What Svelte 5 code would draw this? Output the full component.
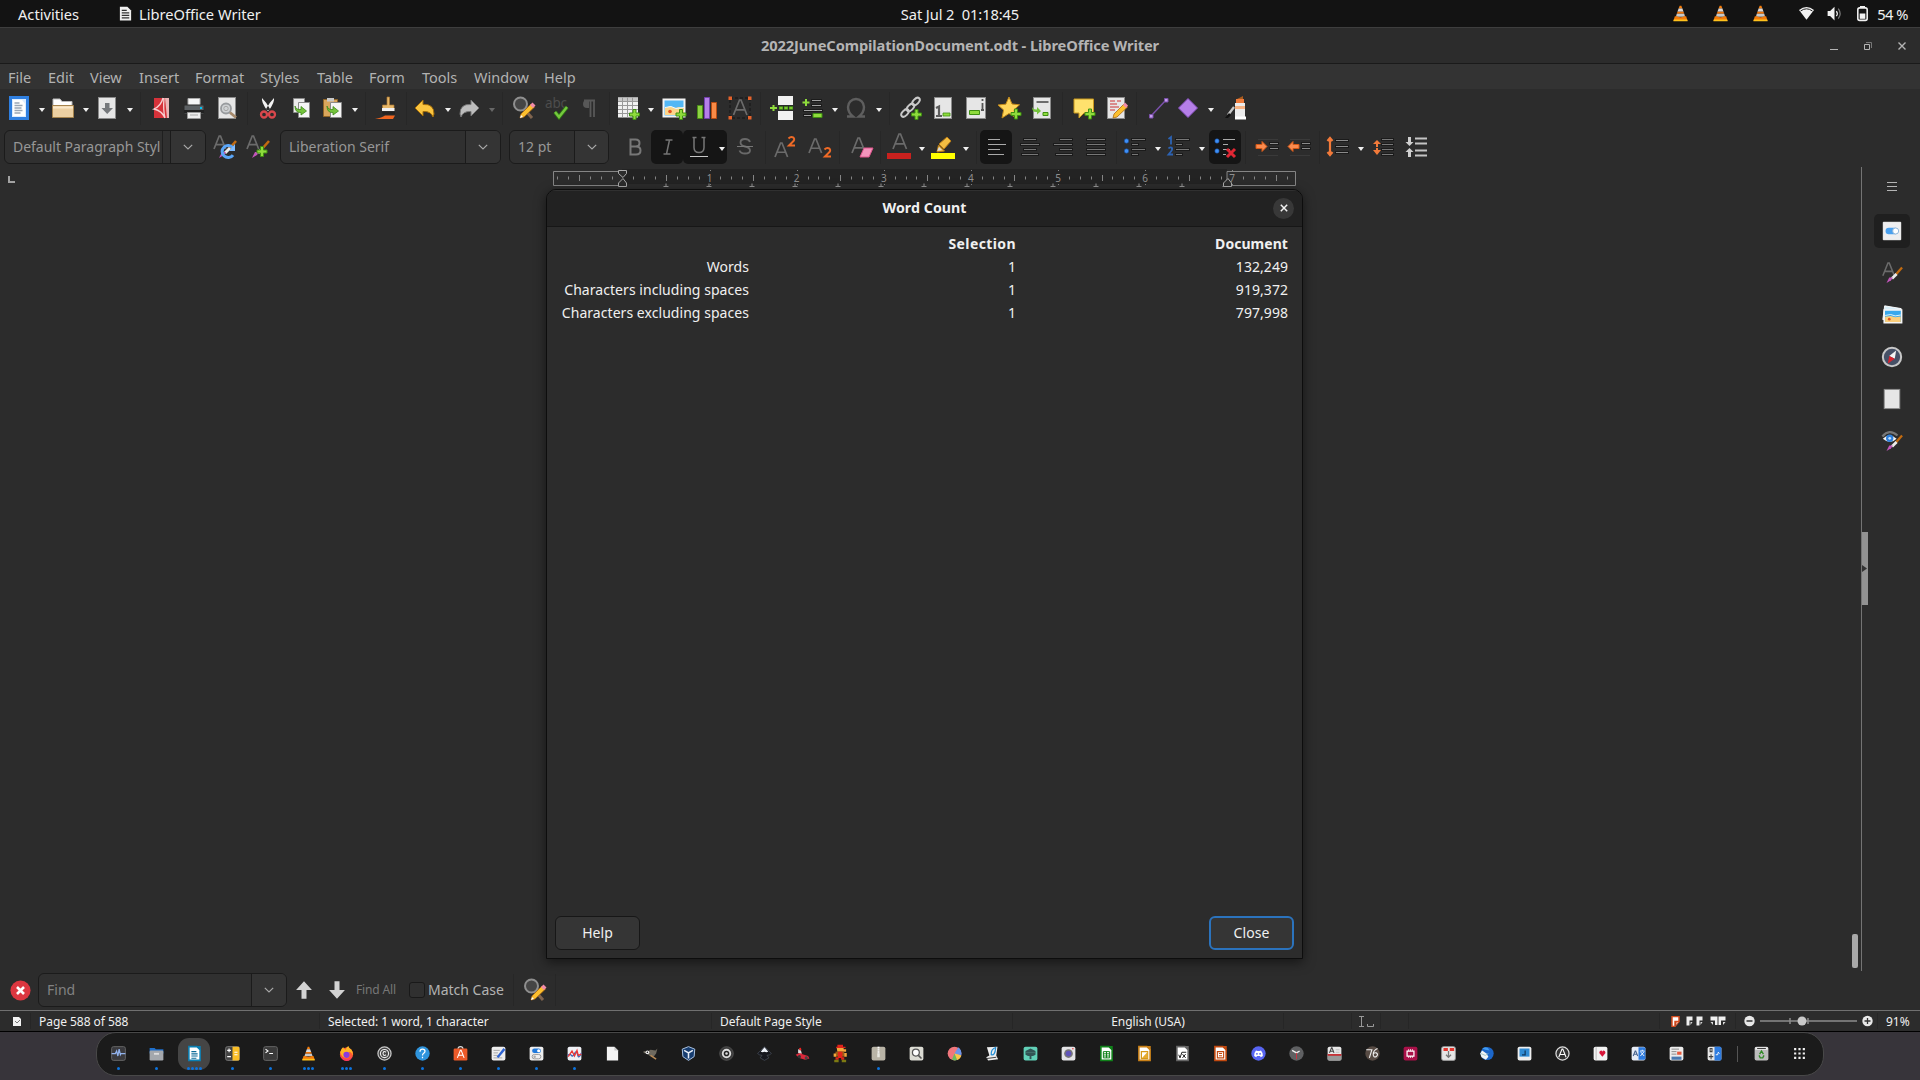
<script>
  // Icon artwork, all on a 24 × 24 grid.
  const page = '<rect x="3.5" y="1.5" width="17" height="21" fill="#e6e6e6" stroke="#8b8b8b"/>';
  const plus = (x, y) =>
    `<path d="M${x - 1.5} ${y - 5}h3v3.5h3.5v3h-3.5v3.5h-3v-3.5h-3.5v-3h3.5z" fill="#8fdc3c" stroke="#3f8f12"/>`;
  const lens =
    '<path d="M13 14l7 8" stroke="#80654f" stroke-width="3"/><circle cx="8.500" cy="8" r="6.500" fill="#454545" stroke="#8f8f8f" stroke-width="2"/><path d="M8 22l1-4L19 8l3.500 3L12 21z" fill="#fcbf2e" stroke="#ad6a12" stroke-width=".8"/><path d="M18 9l2.500-2.500 3 3L21 12z" fill="#f18baa"/><path d="M8 22l1-3 2 2z" fill="#fff"/>';
  const bar = (rows, c = '#747474', dark = '#1b1b1b') =>
    rows.map(([x, y, w]) => `<path d="M${x - 1} ${y + 0.5}h${w + 2}" stroke="${dark}" stroke-width="3"/><path d="M${x} ${y + 0.5}h${w}" stroke="${c}"/>`).join('');
  const photo =
    '<rect x="1.500" y="3.500" width="21" height="17" fill="#52b7f5" stroke="#f4f4f4" stroke-width="2"/><path d="M3 12l5-2 5 2 4-1 5 1v7H3z" fill="#fbd58b"/><path d="M3 11.500l6-1 5 2 8-1" fill="none" stroke="#e9f8ff"/><circle cx="8" cy="15.500" r="1.800" fill="#e3511d"/>';
  const letterA = (x, y, s, c = '#6b6b6b') =>
    `<path d="M${x} ${y}l${s * 0.4} ${-s}h${s * 0.1}l${s * 0.4} ${s}M${x + s * 0.17} ${y - s * 0.34}h${s * 0.57}" fill="none" stroke="${c}" stroke-width="1.700"/>`;
  const brush =
    '<path d="M23 6l-7 8" stroke="#c36b10" stroke-width="2.500"/><path d="M17 13l-5 5" stroke="#ececec" stroke-width="3"/><path d="M13 17l-2 3-5 3 3-6z" fill="#c256ba"/>';
  const dot = (x, y) => `<circle cx="${x}" cy="${y}" r="2.200" fill="#3f90f5" stroke="#1a4ea0" stroke-width=".6"/>`;
  const cone =
    '<path d="M10.800 1h2.400l1.500 4H9.300z" fill="#f57d0a"/><path d="M9.300 5h5.400l1.600 4.500H7.700z" fill="#d9d9d9"/><path d="M7.700 9.500h8.600l1 3H6.700z" fill="#ee7409"/><path d="M6.700 12.500h10.600l1.200 4H5.500z" fill="#c9c9c9"/><path d="M4 16h3q5 2.500 10 0h3l2 6.500H2z" fill="#f07a0a"/><path d="M2.500 20.500h19l.6 2.500H2z" fill="#ffc21c"/>';
  const tile = (bg, inner = '', edge = 'none') =>
    `<rect x="1" y="1" width="22" height="22" rx="3" fill="${bg}" stroke="${edge}" stroke-width="1.500"/>${inner}`;
  const office = (c, inner) =>
    `<path d="M3 1h13l5 5v17H3z" fill="#fff" stroke="${c}" stroke-width="2.500"/><path d="M15 0h7v7z" fill="${c}"/>${inner}`;

  const art = {
    new: '<rect x="3.500" y="1.500" width="17" height="21" fill="#dcecff" stroke="#2f7fe0" stroke-width="3"/><path d="M6 4h9l3 3.500V20H6z" fill="#fff"/><path d="M7.500 7h5m-5 2.500h8m-8 2.500h7m-7 2.500h8m-8 2.500h6" stroke="#9aa6b5" stroke-width="1.300"/>',
    open: '<path d="M2 6V3h7l2 2.500h10V12H2z" fill="#fff" stroke="#b9b9b9"/><path d="M1.500 9.500h21v12h-21z" fill="#ecd0a2" stroke="#a5834d"/><path d="M2 10.500h20v2H2z" fill="#fae8ca"/>',
    save: page + '<path d="M10 7h4.500v5H18l-5.800 6L6.500 12H10z" fill="#75787b"/>',
    pdf: '<path d="M5 2h15v20H5z" fill="#d6323a"/><path d="M16 2h4v20h-2z" fill="#e9b5b7"/><path d="M14 2Q12 10 5 13q8 2 11 9M6 6l0 0M15 2q-1 12 1 20" fill="none" stroke="#f6cfd1" stroke-width="1.300"/>',
    print: '<path d="M6 2.500h12V10H6z" fill="#f6f6f6" stroke="#aaa"/><rect x="2" y="9" width="20" height="9" rx="1" fill="#5c6063" stroke="#2b2b2b"/><path d="M2 14h20v3H2z" fill="#222"/><path d="M5.500 16.500h13v6h-13z" fill="#eee" stroke="#999"/><path d="M8 19h8" stroke="#aaa"/><path d="M18 11h2v2h-2z" fill="#00c3f5"/>',
    preview: page + '<circle cx="11" cy="12.500" r="5" fill="#cfd2d4" stroke="#989b9e" stroke-width="1.800"/><circle cx="11" cy="12.500" r="2.200" fill="none" stroke="#a6a6a6"/><path d="M15 16.500l6 5" stroke="#a5896b" stroke-width="2.800"/>',
    cut: '<path d="M6 2q-1 4 5.500 13L14 13Q11 7 6 2zM18 2q1 4-5.500 13L10 13Q13 7 18 2z" fill="#f4f4f4"/><circle cx="8" cy="18.500" r="3" fill="none" stroke="#d9474c" stroke-width="2.300"/><circle cx="16" cy="18.500" r="3" fill="none" stroke="#d9474c" stroke-width="2.300"/>',
    copy: '<path d="M4.500 2.500h11v14h-11z" fill="#ececec" stroke="#8b8b8b"/><path d="M9.500 6.500h11v15h-11z" fill="#f5f5f5" stroke="#8b8b8b"/><path d="M6 10q1 4 6 3.500V10.500L17.500 15 12 19v-2.500Q6 17 6 10z" fill="#74c33c" stroke="#3f8a19" stroke-width=".8"/>',
    paste: '<path d="M3.500 3.500h14v17h-14z" fill="#d9a65c" stroke="#8f6426"/><path d="M7 2h7v3.500H7z" fill="#c8c8c8"/><path d="M10.500 6.500h11v15h-11z" fill="#f5f5f5" stroke="#8b8b8b"/><path d="M7 10q1 4 6 3.500V10.500L18.500 15 13 19v-2.500Q7 17 7 10z" fill="#74c33c" stroke="#3f8a19" stroke-width=".8"/>',
    clone: '<path d="M12 1h2.500v8H19v4H7.500V9H12z" fill="#e7b768" stroke="#a97730" stroke-width=".7"/><path d="M7 12h12.500v3H7z" fill="#f1f1f1"/><path d="M7 16h13v2.500H8z" fill="#222"/><path d="M0 23q7-1.500 10-3.500h10l-2 3.500z" fill="#f0651f"/>',
    undo: '<path d="M10 4v4.500q11-1 11 9.500l-1 3q-2-6-10-5.500V20L2 12z" fill="#fbc540" stroke="#a36c08"/>',
    redo: '<path d="M14 4v4.500Q3 7.500 3 18l1 3q2-6 10-5.500V20l8-8z" fill="#bdbdbd" stroke="#777"/>',
    find: lens,
    spell: '<text x="0" y="12" font-size="13.500" fill="#4d4d4d" font-family="Noto Sans" textLength="22">abc</text><path d="M10 16l4 5 8-10" fill="none" stroke="#2c7912" stroke-width="4"/><path d="M10 16l4 5 8-10" fill="none" stroke="#76c83e" stroke-width="2.400"/>',
    pilcrow: '<path d="M7 4.500h11M13.500 4v17M17 4v17" stroke="#585858" stroke-width="1.800"/><path d="M12 4H10a4 4 0 0 0 0 8h2z" fill="#585858"/>',
    table: '<path d="M2 1.500h20v20H2z" fill="#f1f1f1"/><path d="M2 1.500h20v4H2z" fill="#c9c9c9"/><path d="M2 5.500h20M2 9.500h20M2 13.500h20M2 17.500h20M6.500 1.500v20M11.500 1.500v20M16.500 1.500v20" stroke="#999"/>' + plus(18.5, 18.5),
    image: photo + plus(19, 18.5),
    chart: '<path d="M2.500 9.500h5v13h-5z" fill="#8ed244" stroke="#4b8f16"/><path d="M9.500 1.500h5v21h-5z" fill="#b57fe8" stroke="#7440ae"/><path d="M16.500 6.500h5v16h-5z" fill="#f98b47" stroke="#b94d12"/>',
    textbox: '<path d="M2 2h20v20H2z" fill="none" stroke="#151515" stroke-dasharray="3 2"/>' + letterA(5.5, 19, 15) + '<path d="M.5.5h3.500v3.500H.5zM20 .5h3.500v3.500H20zM.5 20h3.500v3.500H.5zM20 20h3.500v3.500H20z" fill="#e4622b"/>',
    pagebreak: '<path d="M8 0h15v9H8zM8 15h15v9H8z" fill="#f1f1f1"/><path d="M9 12h15" stroke="#3f8f12" stroke-width="3.500" stroke-dasharray="4 1"/><path d="M9.500 12h15" stroke="#8fdc3c" stroke-width="1.500" stroke-dasharray="3 2"/><path d="M2.500 9h2v2h2.500v2H4.500v2h-2v-2H0v-2h2.500z" fill="#8fdc3c"/>',
    field: bar([[11, 4, 9], [11, 9, 9], [3, 14, 18], [3, 19, 7]], '#a0a0a0') + '<path d="M12 17.500h9v4h-9z" fill="#8fdc3c" stroke="#3f8f12"/><path d="M4 3h2v2.500h2.500v2H6V10H4V7.500H1.500v-2H4z" fill="#8fdc3c"/>',
    omega: '<path d="M3 20.500h6q-5-4-5-9.500a8 8 0 0 1 16 0q0 5.500-5 9.500h6" fill="none" stroke="#5e5e5e" stroke-width="2.400"/>',
    link: '<g fill="none" stroke="#c9c9c9" stroke-width="2"><ellipse cx="17" cy="5.500" rx="4.500" ry="2.600" transform="rotate(-45 17 5.500)"/><ellipse cx="11.500" cy="11.500" rx="4.500" ry="2.600" transform="rotate(-45 11.500 11.500)"/><ellipse cx="6" cy="17" rx="4.500" ry="2.600" transform="rotate(-45 6 17)"/></g>' + plus(17.5, 18.5),
    footnote: page + '<path d="M5 12l3-1.500V20M5 20h6" stroke="#5c5c5c" stroke-width="2.200" fill="none"/><path d="M12 17h7v3h-7z" fill="#8fdc3c" stroke="#3f8f12" stroke-width=".8"/>',
    endnote: '<rect x="2.500" y="1.500" width="19" height="21" fill="#e6e6e6" stroke="#8b8b8b"/><path d="M5.500 14.500h10v4h-10z" fill="#8fdc3c" stroke="#3f8f12"/><path d="M18.500 3v2m0 2v7m-1.500 0h3" stroke="#555" stroke-width="1.800"/>',
    bookmark: '<path d="M11 1l3 7 7.500.8-5.500 5 1.500 7.700L11 17.500 4 22l1.600-8L0 9l7.800-.8z" fill="#ffd65a" stroke="#c48b1a"/>' + plus(18, 18),
    crossref: page + '<path d="M6.500 6h12" stroke="#444" stroke-width="1.500"/><path d="M2 11q1 3 5 2.500V11l4 4-4 3.500V16q-5 .5-5-5z" fill="#74c33c"/><path d="M13 16.500h5v3h-5z" fill="#8fdc3c" stroke="#3f8f12"/>',
    comment: '<path d="M2 3h19.500v14H12l-5 5v-5H2z" fill="#ffe16d" stroke="#c9981d"/>' + plus(18, 18),
    track: page + '<path d="M6 5h5m2 0h4M6 8h7m-7 3h9m-9 3h5" stroke="#c33" stroke-width="1.200"/><path d="M9 22l1-4L20 8l3.500 3L13 21z" fill="#fcbf2e" stroke="#ad6a12" stroke-width=".8"/><path d="M19 9l2-2.500 3 3L22 12z" fill="#f18baa"/>',
    line: '<path d="M5 20L20 4" stroke="#7b51ac" stroke-width="1.500"/><path d="M3.500 18.500H7V22H3.500zM18.500 2.500H22V6h-3.500z" fill="#c79bf0" stroke="#7b51ac"/>',
    diamond: '<path d="M12 2.500l9.500 9.500-9.500 9.500L2.500 12z" fill="#b57fe8" stroke="#8750c0"/>',
    draw: '<path d="M14 3l6-3v4h-6z" fill="#a85b1d"/><path d="M13 3h8v4h-8z" fill="#ee7c3c"/><path d="M12 7h10v14H12z" fill="#ececec"/><path d="M12 10h10v3H12z" fill="#f7b384"/><path d="M12 20.500h11v3H12z" fill="#fff"/><path d="M11 11l-6 8" stroke="#c8c8c8" stroke-width="2.400"/><path d="M6 17l2 2-3 3H2z" fill="#111"/>',
    styleUpdate: letterA(1, 14, 13) + brush + '<path d="M20 13a6 6 0 1 0 0 7" fill="none" stroke="#5aa5f7" stroke-width="3"/><path d="M22 9v7h-6z" fill="#7fbcff"/>',
    styleNew: letterA(1, 14, 13) + brush + plus(16, 16.5),
    bold: '<path d="M7.500 4.500h5q4 0 4 3.500t-4 3.500h-5zm0 7h5.500q4.500 0 4.500 4t-4.500 4H7.500z" fill="none" stroke="#777" stroke-width="2"/>',
    italic: '<path d="M10.500 5h7M14.500 5l-3 14M8.500 19h7" stroke="#747474" fill="none" stroke-width="1.500"/>',
    underline: '<path d="M5.500 2.500h4M14.500 2.500h4M7 2.500v10q0 5 5 5t5-5v-10" fill="none" stroke="#777" stroke-width="1.500"/><path d="M3 21.500h18" stroke="#c9c9c9"/>',
    strike: '<path d="M17 7q-1-3-5-3-4.500 0-4.500 3.500 0 3 4.500 4 5 1 5 4t-5 3q-4.500 0-5.500-3" fill="none" stroke="#696969" stroke-width="1.800"/><path d="M4 11.500h16" stroke="#777"/>',
    sup: letterA(2, 22, 14) + '<path d="M15.500 3.500q2.500-2.500 5-.8 1.800 2-1 4.300l-3.500 3.500H22" fill="none" stroke="#ef6a26" stroke-width="2"/>',
    sub: letterA(1, 18, 14) + '<path d="M16.500 14.500q2.500-2.500 5-.8 1.800 2-1 4.300L17 21.500h6" fill="none" stroke="#ef6a26" stroke-width="2"/>',
    clear: letterA(2, 18, 15) + '<path d="M14 13h9l-4 9h-9z" fill="#f595bd" stroke="#e2558e"/>',
    color: letterA(6, 14, 15) + '<path d="M0 18h24v6H0z" fill="#c9211e"/>',
    highlight: '<path d="M6 17l1.500-7 6 6zM8 9l8-7 4 4-7 8z" fill="#f2bd42" stroke="#b77b16"/><path d="M6 16l2-4 3 3z" fill="#d8d8d8"/><path d="M0 18h24v6H0z" fill="#ffff00"/>',
    left: bar([[4, 4, 12], [4, 9, 18], [4, 14, 12], [4, 19, 16]], '#aaa', '#151515'),
    center: bar([[6, 4, 12], [3, 9, 18], [6, 14, 12], [4, 19, 16]], '#777'),
    right: bar([[9, 4, 12], [3, 9, 18], [9, 14, 12], [5, 19, 16]], '#777'),
    justify: bar([[3, 4, 18], [3, 9, 18], [3, 14, 18], [3, 19, 18]], '#777'),
    bullets: dot(3.5, 6) + dot(3.5, 16) + bar([[9, 4, 13], [9, 9, 6], [9, 14, 13], [9, 19, 6]], '#777'),
    numbers: '<path d="M1.500 4L4 2v7.500M1.500 13.500q1-1.500 3-1 1.500 1.500-.5 4L1.500 19.500H6" fill="none" stroke="#2c63b4" stroke-width="1.800"/>' + bar([[9, 4, 13], [9, 9, 6], [9, 14, 13], [9, 19, 6]], '#777'),
    nolist: dot(4, 6) + dot(4, 16) + bar([[10, 4, 12], [10, 9, 5], [10, 14, 7], [10, 19, 3]], '#aaa', '#151515') + '<path d="M14 14l8 8m0-8l-8 8" stroke="#e02734" stroke-width="3"/>',
    indent: bar([[15, 8, 8], [15, 13, 8]], '#8a8a8a') + '<path d="M3 4.500h20M3 20.500h20" stroke="#3a3a3a"/><path d="M1 9.500h6V6.500l5 5-5 5v-3H1z" fill="#fb8b4e" stroke="#d35716"/>',
    outdent: bar([[15, 8, 8], [15, 13, 8]], '#8a8a8a') + '<path d="M3 4.500h20M3 20.500h20" stroke="#3a3a3a"/><path d="M12 9.500H6V6.500l-5 5 5 5v-3h6z" fill="#fb8b4e" stroke="#d35716"/>',
    spacing: bar([[10, 5, 12], [10, 11, 12], [10, 17, 12]], '#8a8a8a') + '<path d="M4 3v17M1.500 6L4 3l2.500 3M1.500 17L4 20l2.500-3" fill="none" stroke="#f27a3a" stroke-width="2.200"/>',
    paraInc: bar([[11, 4, 11], [11, 9, 11], [11, 14, 11], [11, 19, 11]], '#777') + '<path d="M6 5l4 4H7v6h3l-4 5-4-5h3V9H2z" fill="#f27a3a"/><path d="M3 12.500h6" stroke="#2c2c2c"/>',
    paraDec: '<path d="M11 3.500h12M11 8.500h12M11 15.500h12M11 20.500h12" stroke="#c4c4c4" stroke-width="2.200"/><path d="M4 2h3v5h2.500l-4 4-4-4H4zM4 22h3v-5h2.500l-4-4-4 4H4z" fill="#cfcfcf"/>',
    settings: '<path d="M2.500 2.500h19v19h-19z" fill="#eeeef0" stroke="#fff"/><rect x="5" y="8.500" width="14" height="7" rx="3.500" fill="#4aa0ee"/><circle cx="16" cy="12" r="3.300" fill="#fff" stroke="#8fb4d6"/>',
    styles: letterA(2, 15, 14) + brush,
    gallery: '<path d="M4 2l18 3v10L2 17z" fill="#d8eef9" stroke="#fff"/><path d="M3.500 6.500h19v14h-19z" fill="#38a8ec" stroke="#f5f5f5" stroke-width="1.700"/><path d="M4.500 14l6-1 5 1.500 6-1v6h-17z" fill="#fbcf7c"/><path d="M4.500 12.500l6-1 5 1.500 6-1" stroke="#e9f8ff" fill="none"/><circle cx="9" cy="16.500" r="1.500" fill="#e3511d"/>',
    navigator: '<circle cx="12" cy="12" r="10" fill="#465066" stroke="#c8c8c8" stroke-width="2.200"/><path d="M16.500 5l-1.500 9-6-3z" fill="#f3f3f3"/><path d="M7.500 19L9 11l6 3z" fill="#d8232e"/>',
    page,
    inspector: '<path d="M1.500 7Q9-2 18 6" fill="none" stroke="#777" stroke-width="2.500"/><path d="M2 9.500q7-7 15 0-7 7-15 0z" fill="#f2f2f2"/><circle cx="9.500" cy="9" r="4" fill="#2f80dc"/><circle cx="9.500" cy="9" r="1.500" fill="#bfe0ff"/>' + brush,
    up: '<path d="M12 1.500L21.500 12H15v10.500H9V12H2.500z" fill="#d2d2d2"/>',
    down: '<path d="M12 22.500L21.500 12H15V1.500H9V12H2.500z" fill="#d2d2d2"/>',
    stop: '<circle cx="12" cy="12" r="11.500" fill="#dc3640"/><path d="M8 8l8 8m0-8l-8 8" stroke="#fff" stroke-width="3"/>',
    cone,
    wifi: '<path d="M0 6.500Q12-3 24 6.500L12 22z" fill="#f2f2f2"/><path d="M2.500 8Q12 1 21.500 8" fill="none" stroke="#131313" stroke-width="1.500"/>',
    volume: '<path d="M1 8h4l7-7v22l-7-7H1z" fill="#f2f2f2"/><path d="M15 8q3 4 0 8" fill="none" stroke="#f2f2f2" stroke-width="2"/><path d="M18 4q6 8 0 16" fill="none" stroke="#777" stroke-width="2"/>',
    battery: '<path d="M8 0h8v3H8z" fill="#f2f2f2"/><rect x="4.500" y="3" width="15" height="20" rx="3" fill="none" stroke="#f2f2f2" stroke-width="2.500"/><path d="M7.500 12h9v8.500h-9z" fill="#f2f2f2"/>',
    doc: '<path d="M3 1h12l6 6v16H3z" fill="#f0f0f0"/><path d="M6 7h8M6 11h12M6 15h12M6 19h12" stroke="#333" stroke-width="1.800"/>',

    monitor: tile('#3a3a3e', '<path d="M1 12h6l2-4 2 8 2-11 2 9 1-2h7" fill="none" stroke="#92b3ee" stroke-width="2"/>', '#666'),
    files: '<path d="M1 3h8l2 2h12v7H1z" fill="#1f6fcb"/><rect x="1" y="7" width="22" height="16" rx="2" fill="#a4a8ad"/><path d="M8 11h8v3H8z" fill="#ddd"/>',
    writer: office('#0b7fb2', '<path d="M7 9h8M7 12.500h10M7 16h10M7 19.500h8" stroke="#0b6a98" stroke-width="1.800"/>'),
    calculator: tile('#444', '<path d="M12 1h9q2 0 2 2v18q0 2-2 2h-9z" fill="#fbbf27"/><path d="M3.500 7h6m-3-3v6M3.500 17h6M15 10h5m-5 4h5" stroke="#fff" stroke-width="1.800"/>', '#777'),
    terminal: tile('#3a3a3a', '<path d="M4 5l4 3-4 3M10 12h6" fill="none" stroke="#fff" stroke-width="1.800"/>', '#666'),
    firefox: '<circle cx="12" cy="13" r="10.500" fill="#ff5a35"/><path d="M2 10Q4 3 7 2q0 3 4 4 0-4 4-6 1 4 5 6 3 4 2 9-2-6-6-6 3 9-5 10Q4 18 2 10z" fill="#ffb524"/><circle cx="12" cy="14" r="5" fill="#8a3be0"/><path d="M2 14q3 7 10 7 7-1 9-6-1 9-9 9-8-1-10-10z" fill="#fb3a62"/>',
    copyright: '<circle cx="12" cy="12" r="10.500" fill="#444" stroke="#c9c9c9" stroke-width="2"/><circle cx="12" cy="12" r="6.500" fill="none" stroke="#eee" stroke-width="1.800"/><path d="M14.500 10q-4-3-5 2 1 5 5 2" fill="none" stroke="#eee" stroke-width="1.800"/>',
    help: '<circle cx="12" cy="12" r="11.500" fill="#2f94dc"/><path d="M8 9q0-4 4-4t4 3.500q0 2-2.500 3.500-1.500 1-1.500 3M12 17v2.500" fill="none" stroke="#fff" stroke-width="2"/>',
    software: '<path d="M8 5q0-4 4-4t4 4" fill="none" stroke="#ddd" stroke-width="1.700"/><rect x="1" y="4" width="22" height="19" rx="2" fill="#ec5a29"/>' + letterA(7, 19, 12, '#fff'),
    editor: tile('#eee', '<path d="M4 7h10M4 11h7M4 15h7M4 19h14" stroke="#999" stroke-width="1.300"/><path d="M9 17L20 3l3 3-11 13z" fill="#2e63d2"/>'),
    tweaks: tile('#eee', '<rect x="5" y="4" width="14" height="7" rx="3.500" fill="#2079db"/><circle cx="15.500" cy="7.500" r="2.500" fill="#fff"/><rect x="5" y="13.500" width="14" height="7" rx="3.500" fill="none" stroke="#999" stroke-width="1.500"/><circle cx="9" cy="17" r="2" fill="#aaa"/>'),
    graph: tile('#eef0f5', '<path d="M1 15q4-3 6 0t5-3 5 2 6-3" fill="none" stroke="#3b68bb" stroke-width="2"/><path d="M2 17L8 8l4 8 4-9 2 8 5-2" fill="none" stroke="#e33" stroke-width="2"/>'),
    blank: '<path d="M3 1h12l6 6v16H3z" fill="#f3f3f3"/><path d="M15 1v6h6z" fill="#c9c9c9"/>',
    gimp: '<path d="M1 8l6 1 5-3 8 1 3-3-2 8-4 5-6-1-5-4-5-1z" fill="#6f6a5f"/><circle cx="7" cy="10" r="3" fill="#eee"/><circle cx="7" cy="10" r="1.200" fill="#111"/><path d="M12 15l9 6" stroke="#b78a56" stroke-width="2.500"/>',
    vbox: '<path d="M12 1l10 4-1 12-9 6-9-6L2 5z" fill="#173d70" stroke="#a9c3e3" stroke-width="1.600"/><path d="M5 7l7 4 7-4M12 11v9" stroke="#e7eef8" stroke-width="2.500" fill="none"/>',
    speaker: '<circle cx="12" cy="12" r="11" fill="#3d3d3d" stroke="#606060"/><circle cx="12" cy="12" r="6" fill="#222" stroke="#ddd" stroke-width="3"/><circle cx="12" cy="12" r="2" fill="#ddd"/>',
    inkscape: '<path d="M12 1l11 11q-3 3-7 3l3 4-7 4-7-4 3-4q-4 0-7-3z" fill="#15171e" stroke="#4f5664"/><path d="M12 2l6 7-3 1-3-1-3 1-3-1z" fill="#eef3fa"/>',
    car: '<path d="M1 14l8-4 3 3 9 3 2 4-7 2-9-3z" fill="#d9283a"/><path d="M5 5l4 1 2 6-6-1z" fill="#ddd"/><path d="M8 3l1 4" stroke="#e22" stroke-width="3"/><circle cx="7" cy="17" r="2.500" fill="#333"/><circle cx="18" cy="19" r="2.500" fill="#444"/>',
    plumber: '<path d="M7-2h9v3h4v2H5V1h2z" fill="#e2231a"/><path d="M6 3h11v2h4v4H7z" fill="#f4a83c"/><path d="M4 9h14v8H4z" fill="#a05a16"/><path d="M8 9h7v9h3v4h-5v-3H9v3H4v-4h4z" fill="#e2231a"/><path d="M1 12h4v5H1zM18 11h4v6h-4z" fill="#f4a83c"/><path d="M2 22h7v4H2zM14 22h7v4h-7z" fill="#7d7a12"/>',
    archive: tile('#b9b4a6', '<path d="M12 1v12" stroke="#fff" stroke-width="3" stroke-dasharray="2 1"/><path d="M10 12h4v6h-4z" fill="#e8e8e0"/>'),
    viewer: tile('#dcdcd4', '<circle cx="11" cy="10.500" r="5.500" fill="#fff" stroke="#555" stroke-width="2"/><path d="M15 15l5 5" stroke="#555" stroke-width="2.500"/>'),
    pie: '<circle cx="12" cy="12" r="11" fill="#f0767c"/><path d="M12 12L18 2q6 4 5 13z" fill="#6a96ea"/><path d="M12 12l11 3q-2 6-7 7.500z" fill="#f8c74a"/><path d="M12 12l4 10.500q-4 1.500-8-1z" fill="#67bd5d"/>',
    scan: '<path d="M3 2l17-1-2 14 3 6-16 2-3-5 5-3z" fill="#eee"/><path d="M18 2q-9 3-8 12 6 2 7-11" fill="none" stroke="#248ed4" stroke-width="2"/><path d="M3 20l15-2" stroke="#444" stroke-width="2"/>',
    robot: tile('#61d0b7', '<path d="M4 8l8-4 8 4v6l-4 2H8l-4-2z" fill="#315454"/><path d="M4 10.500h16" stroke="#4f8279"/><path d="M12 16v5" stroke="#315454" stroke-width="3"/>'),
    camera: tile('#e4e4e6', '<circle cx="12" cy="12" r="7" fill="#777"/><circle cx="12" cy="12" r="4.500" fill="#6054b8"/><circle cx="19" cy="4.500" r="1.200" fill="#e33"/>'),
    calc: office('#10821a', '<path d="M7 9h10v10H7zM7 12.500h10M7 16h10M12 9v10" fill="none" stroke="#10821a" stroke-width="1.600"/>'),
    sketch: office('#c98017', '<path d="M7 9h10v11H7z" fill="none" stroke="#d89a18" stroke-width="2"/><path d="M8 19L17 9v10z" fill="#e6ac33"/>'),
    math: office('#666', '<path d="M6 14l2 5 3-9h7M12 13l5 6m0-6l-5 6" fill="none" stroke="#222" stroke-width="1.600"/>'),
    impress: office('#c2490f', '<path d="M7 9h10v10H7zM9.500 12h5M9.500 15.500h5" fill="none" stroke="#c2490f" stroke-width="1.800"/>'),
    discord: '<circle cx="12" cy="12" r="11.500" fill="#5865f2"/><path d="M5 16q0-6 3-9l2.500 1h3L16 7q3 3 3 9l-3.500 2-1-2h-5l-1 2z" fill="#fff"/><circle cx="9.500" cy="12.500" r="1.500" fill="#5865f2"/><circle cx="14.500" cy="12.500" r="1.500" fill="#5865f2"/>',
    clock: '<circle cx="12" cy="12" r="11.500" fill="#5f6062"/><path d="M5 7l7 4 5-3" stroke="#eee" stroke-width="2.200" fill="none"/><path d="M12 11v10" stroke="#cf3240" stroke-width="1.500"/>',
    dictionary: tile('#e6e6e6', '<path d="M1 14h22v7q0 2-2 2H3q-2 0-2-2z" fill="#999"/><path d="M1 13h22v2.500H1z" fill="#c91b20"/><path d="M14 6h6m-6 4h6" stroke="#aaa"/>' + letterA(4, 11, 8, '#444')),
    seventysix: '<circle cx="12" cy="12" r="11.500" fill="#574b44"/><path d="M2 6h9L7 19M20 4q-7 3-7 10 1 5 5 3 4-4 0-6-4-1-5 3" fill="none" stroke="#eee" stroke-width="1.800"/>',
    chip: tile('#a91149', '<path d="M6.500 8h11v8h-11z" fill="none" stroke="#fff" stroke-width="2"/><path d="M9 5v3m3-3v3m3-3v3M9 16v3m3-3v3m3-3v3" stroke="#fff" stroke-width="1.300"/>'),
    download: tile('#e6e6e6', '<path d="M4 3h7v5H4zM14 3h7v5h-7z" fill="#e3372f"/><path d="M12 8v9M8 14l4 4 4-4" fill="none" stroke="#777" stroke-width="2"/>', '#999'),
    thunderbird: '<circle cx="13" cy="12" r="10.500" fill="#1c66c9"/><path d="M2 12l3-5 7 5 3 5-4 5-7-4z" fill="#f1f4f7"/><path d="M3 12l7 3 5-3" fill="none" stroke="#9bb" stroke-width="1.300"/><path d="M5 4q8-5 12 3l-7-1z" fill="#3f9bf2"/>',
    shot: tile('#eee', '<path d="M4 4h16v13H4z" fill="#2f8bd4"/><path d="M13 7v7H8" stroke="#103a60" stroke-width="2" fill="none"/>'),
    updater: '<circle cx="12" cy="12" r="10.500" fill="#333" stroke="#ddd" stroke-width="2"/>' + letterA(6, 18, 13, '#fff'),
    cards: tile('#f3f3f3', '<path d="M5 2v20" stroke="#999"/><path d="M15 17l-5-6q0-4 3-4 1.500 0 2 2 .5-2 2-2 3 0 3 4z" fill="#d9163a"/>'),
    translate: tile('#e6ebf5', '<path d="M12 2h9q2 0 2 2v16q0 2-2 2h-9z" fill="#2e7ce0"/><path d="M14.500 8h7m-3.500-2v2m-3 8l6-7m-6 0l6 7" stroke="#fff" stroke-width="1.400"/>' + letterA(3.5, 16, 8, '#47628d')),
    news: tile('#ececec', '<path d="M4 5h12M4 9h8M4 13h8" stroke="#888" stroke-width="1.500"/><path d="M13 9h7v5h-7z" fill="#e8583b"/><path d="M4 17h16v5H4z" fill="#4a7ab0"/>'),
    converter: tile('#e7e7e7', '<path d="M12 1h9q2 0 2 2v18q0 2-2 2h-9z" fill="#2e7ce0"/><path d="M6.500 13v8M3 17h7M5 4h3v5H5z" stroke="#444" stroke-width="1.700" fill="none"/><path d="M14 14h3l1-4 2 2" stroke="#fff" stroke-width="1.500" fill="none"/>'),
    trash: tile('#bdbdbd', '<path d="M2 2h20v4H2z" fill="#eee"/><path d="M5 4h14" stroke="#333" stroke-width="1.500"/><path d="M9 13l3-5 3 5m1 2l-2 4h-4l-2-4" fill="none" stroke="#2f8b26" stroke-width="2.200"/>'),
    grid: '<path d="M2 2h4v4H2zM10 2h4v4h-4zM18 2h4v4h-4zM2 10h4v4H2zM10 10h4v4h-4zM18 10h4v4h-4zM2 18h4v4H2zM10 18h4v4h-4zM18 18h4v4h-4z" fill="#f0f0f0"/>'
  };

  // Turns a list of [name, centre] into items with the gap that precedes each.
  const widths = { '|': 1, v: 10 };
  function spaced(list, start = 0) {
    let end = start;
    return list.map(([name, centre]) => {
      const w = widths[name] ?? 24;
      const gap = centre - w / 2 - end;
      end = centre + w / 2;
      return { name, gap };
    });
  }

  const standard = spaced([
    ['new', 19], ['v', 41.5], ['open', 63], ['v', 85.5], ['save', 107], ['v', 129.5], ['|', 140.5],
    ['pdf', 161], ['print', 194], ['preview', 227], ['|', 247.5], ['cut', 268], ['copy', 301], ['paste', 332],
    ['v', 354.5], ['|', 365.5], ['clone', 387], ['|', 406.5], ['undo', 425], ['v', 447.5], ['redo', 469], ['voff', 491.5],
    ['|', 502.5], ['find', 524], ['spell', 557], ['pilcrow', 589], ['|', 609.5], ['table', 628], ['v', 650.5],
    ['image', 674], ['chart', 707], ['textbox', 740], ['|', 760.5], ['pagebreak', 782], ['field', 813], ['v', 834.5],
    ['omega', 856], ['v', 878.5], ['|', 889.5], ['link', 911], ['footnote', 943], ['endnote', 976], ['bookmark', 1010],
    ['crossref', 1042], ['|', 1062.5], ['comment', 1084], ['track', 1116], ['|', 1136.5], ['line', 1158],
    ['diamond', 1188], ['v', 1210.5], ['draw', 1235]
  ]);
  const formatting = spaced([
    ['bold', 635], ['italic', 667], ['underline', 699], ['v', 721.5], ['strike', 745], ['|', 765.5], ['sup', 785],
    ['sub', 820], ['|', 839.5], ['clear', 862], ['|', 880.5], ['color', 899], ['v', 921.5], ['highlight', 943],
    ['v', 965.5], ['|', 976.5], ['left', 996], ['center', 1030], ['right', 1063], ['justify', 1096], ['|', 1116.5],
    ['bullets', 1135], ['v', 1157.5], ['numbers', 1179], ['v', 1201.5], ['nolist', 1225], ['|', 1245.5],
    ['indent', 1267], ['outdent', 1299], ['|', 1319.5], ['spacing', 1338], ['v', 1360.5], ['paraInc', 1383], ['paraDec', 1416]
  ], 616);
  const pressed = ['italic', 'underline', 'left', 'nolist'];

  const menus = [
    ['File', 40], ['Edit', 42], ['View', 49], ['Insert', 56], ['Format', 65], ['Styles', 57],
    ['Table', 52], ['Form', 53], ['Tools', 52], ['Window', 70], ['Help', 40]
  ];
  const rows = [
    ['Words', '1', '132,249'],
    ['Characters including spaces', '1', '919,372'],
    ['Characters excluding spaces', '1', '797,998']
  ];
  const deck = ['settings', 'styles', 'gallery', 'navigator', 'page', 'inspector'];
  const dock = [
    ['monitor', 1], ['files', 1], ['writer', 4], ['calculator', 1], ['terminal', 1], ['cone', 3], ['firefox', 3],
    ['copyright', 1], ['help', 1], ['software', 1], ['editor', 1], ['tweaks', 1], ['graph', 1], ['blank', 0],
    ['gimp', 0], ['vbox', 0], ['speaker', 0], ['inkscape', 0], ['car', 0], ['plumber', 0], ['archive', 1],
    ['viewer', 0], ['pie', 0], ['scan', 0], ['robot', 0], ['camera', 0], ['calc', 0], ['sketch', 0], ['math', 0],
    ['impress', 0], ['discord', 0], ['clock', 0], ['dictionary', 0], ['seventysix', 0], ['chip', 0], ['download', 0],
    ['thunderbird', 0], ['shot', 0], ['updater', 0], ['cards', 0], ['translate', 0], ['news', 0], ['converter', 0],
    ['|', 0], ['trash', 0], ['grid', 0]
  ];

  // Ruler geometry: inches start at x = 69.5, with a tick every eighth.
  const inch = 87.1;
  const ticks = Array.from({ length: 69 }, (_, i) => i - 6).filter((i) => i % 8 !== 0 && 69.5 + (i * inch) / 8 < 741);
  const tabs = Array.from({ length: 14 }, (_, i) => 69.5 + 43 * (i + 1));
</script>

{#snippet icon(name, size = 24)}
  <svg class="icon" width={size} height={size} viewBox="0 0 24 24" aria-hidden="true">{@html art[name]}</svg>
{/snippet}

{#snippet chevron()}
  <svg class="icon" width="10" height="6" viewBox="0 0 10 6"><path d="M.8.8L5 5 9.200.8" fill="none" stroke="#a6a6a6" stroke-width="1.200" /></svg>
{/snippet}

{#snippet tools(items)}
  {#each items as { name, gap }}
    <span class="tool" class:sep={name === '|'} class:drop={name === 'v' || name === 'voff'} class:wide={name === 'voff'} style:margin-left="{gap}px">
      {#if name === 'v' || name === 'voff'}
        <i class="caret" class:off={name === 'voff'}></i>
      {:else if name !== '|'}
        {#if pressed.includes(name)}<i class="pressed" class:split={name === 'underline'}></i>{/if}
        {@render icon(name)}
      {/if}
    </span>
  {/each}
{/snippet}

<div class="screen">
  <header class="topbar">
    <span class="activities">Activities</span>
    <span class="app">{@render icon('doc', 15)}<span>LibreOffice Writer</span></span>
    <span class="date">Sat Jul 2&nbsp; 01:18:45</span>
    <span class="tray">
      <span class="cones">{@render icon('cone', 17)}{@render icon('cone', 17)}{@render icon('cone', 17)}</span>
      {@render icon('wifi', 15)}
      {@render icon('volume', 15)}
      {@render icon('battery', 15)}
      <span class="percent">54 %</span>
    </span>
  </header>

  <div class="titlebar">
    <strong>2022JuneCompilationDocument.odt - LibreOffice Writer</strong>
    <span class="controls">
      <svg width="10" height="10" viewBox="0 0 10 10"><path d="M1 8.500h8" stroke="#b4b4b4" /></svg>
      <svg width="10" height="10" viewBox="0 0 10 10"><path d="M1.500 3.500h5v5h-5z" fill="none" stroke="#b4b4b4" /><path d="M3 1.500h5.500V7" fill="none" stroke="#777" /></svg>
      <svg width="10" height="10" viewBox="0 0 10 10"><path d="M1.500 1.500l7 7m0-7l-7 7" stroke="#b4b4b4" stroke-width="1.400" /></svg>
    </span>
  </div>

  <nav class="menubar">
    {#each menus as [label, width]}<span style:width="{width}px">{label}</span>{/each}
  </nav>

  <div class="toolbar standard">{@render tools(standard)}</div>

  <div class="toolbar formatting">
    <div class="combo style"><span class="value">Default Paragraph Styl</span><i class="gutter"></i><span class="open">{@render chevron()}</span></div>
    <span class="styletools">{@render icon('styleUpdate')}{@render icon('styleNew')}</span>
    <div class="combo font"><span class="value">Liberation Serif</span><span class="open">{@render chevron()}</span></div>
    <div class="combo size"><span class="value">12 pt</span><span class="open">{@render chevron()}</span></div>
    <span class="fmt">{@render tools(formatting)}</span>
  </div>

  <main class="workspace">
    <div class="canvas">
      <svg class="corner" width="7" height="7" viewBox="0 0 7 7"><path d="M1 0v6h6" fill="none" stroke="#a2a2a2" stroke-width="2" /></svg>
      <svg class="ruler" width="744" height="20" viewBox="0 0 744 20">
        <rect x="69" y="1" width="605" height="15" fill="#232323" />
        <path d="M69 3.500H.5v14H69M674 3.500h68.500v14H674z" fill="none" stroke="#858585" />
        {#each ticks as i}
          <path d="M{Math.round(69.5 + (i * inch) / 8) + 0.5} {i % 4 ? 8.5 : 7}v{i % 4 ? 3 : 6}" stroke="#858585" />
        {/each}
        {#each [1, 2, 3, 4, 5, 6, 7] as n}
          <text x={69.5 + n * inch} y="13.500" text-anchor="middle">{n}</text>
          <path d="M{Math.round(69.5 + n * inch) + 0.5} 2v1m0 13v1" stroke="#858585" />
        {/each}
        {#each tabs as x}
          <path d="M{Math.round(x)} 18.500h5m-2.500-3v3" transform="translate(-2.500 0)" stroke="#959595" fill="none" />
        {/each}
        <path d="M65.500 2.500h8v3l-3.500 4-4.500-4zM65.500 18.500h8v-3.500l-3.500-4.500-4.500 4.500zM670.500 18.500h8v-3.500l-3.500-4.500-4.500 4.500z" fill="#2c2c2c" stroke="#ababab" />
      </svg>
      <i class="scroll"></i>
    </div>
    <aside class="deck">
      <i class="handle"><svg width="5" height="7" viewBox="0 0 5 7"><path d="M0 0l5 3.500L0 7z" fill="#333" /></svg></i>
      <svg class="burger" width="10" height="10" viewBox="0 0 10 10"><path d="M0 1.500h10M0 5.500h10M0 9.500h10" stroke="#b5b5b5" /></svg>
      {#each deck as name, i}
        <span class="tab" class:active={i === 0}>{@render icon(name, 22)}</span>
      {/each}
    </aside>
  </main>

  <div class="findbar">
    {@render icon('stop', 21)}
    <div class="combo find"><span class="value">Find</span><span class="open">{@render chevron()}</span></div>
    <span class="arrows">{@render icon('up', 20)}{@render icon('down', 20)}</span>
    <span class="all">Find All</span>
    <i class="check"></i>
    <span class="match">Match Case</span>
    <i class="rule"></i>
    {@render icon('find', 24)}
    <i class="rule"></i>
  </div>

  <footer class="status">
    <span class="state"><svg width="8" height="9" viewBox="0 0 8 9"><path d="M0 0h6l2 2v7H0z" fill="#f2f2f2" /><path d="M2 4l2 2 3-3" fill="none" stroke="#777" /></svg></span>
    <span class="pages">Page 588 of 588</span>
    <span class="selected">Selected: 1 word, 1 character</span>
    <span class="pagestyle">Default Page Style</span>
    <span class="language">English (USA)</span>
    <span class="blank"></span>
    <span class="insert"><svg width="17" height="12" viewBox="0 0 17 12"><path d="M0 .5h5M0 10.500h5M2.500.5v10M8.500 8v2.500h6V8" fill="none" stroke="#999" /></svg></span>
    <span class="tiny"></span>
    <span class="gap"></span>
    <span class="views">
      <svg width="56" height="11" viewBox="0 0 56 11">
        <path d="M1 .5h7v5h-4v5H1z" fill="#fff" stroke="#d64d20" stroke-width="1.500" />
        <path d="M5 6h3L5 9.500z" fill="#fff" stroke="#d64d20" />
        <path d="M15.500 .5h6v4h-3v5h-3zM25.500 .5h6v4h-3v5h-3zM39.500 .5h7v8.500h-2.500v-4.500h-4.500zM47.500 .5h7v4h-4.500v4.500h-2.500z" fill="#f0f0f0" />
        <path d="M19.500 6h2l-2 3zM29.500 6h2l-2 3zM42 6v3l-2.500-3zM52 6v3l2.500-3z" fill="#ddd" />
      </svg>
    </span>
    <span class="zoom">
      <svg width="130" height="14" viewBox="0 0 130 14">
        <path d="M17 7h97" stroke="#8c8c8c" stroke-width="1.500" /><path d="M47 4v6M65 4v6" stroke="#8c8c8c" stroke-width="1.500" />
        <circle cx="59" cy="7" r="4.500" fill="#c9c9c9" /><circle cx="6.500" cy="7" r="5.200" fill="#e8e8e8" /><circle cx="124.500" cy="7" r="5.200" fill="#e8e8e8" />
        <path d="M3.500 7h6M121.500 7h6M124.500 4v6" stroke="#333" stroke-width="1.300" />
      </svg>
    </span>
    <span class="percent">91%</span>
  </footer>

  <div class="desktop">
    <div class="dock">
      {#each dock as [name, windows]}
        {#if name === '|'}
          <i class="divider"></i>
        {:else}
          <span class="launcher" class:active={name === 'writer'}>
            {@render icon(name, name === 'grid' ? 13 : 15)}
            <span class="dots">{#each Array(windows) as _}<i></i>{/each}</span>
          </span>
        {/if}
      {/each}
    </div>
  </div>

  <section class="dialog">
    <div class="head">
      <strong>Word Count</strong>
      <span class="close"><svg width="8" height="8" viewBox="0 0 8 8"><path d="M.8.8l6.400 6.400m0-6.400L.8 7.200" stroke="#f2f2f2" stroke-width="1.500" /></svg></span>
    </div>
    <div class="counts">
      <b></b><b class="spread">Selection</b><b>Document</b>
      {#each rows as row}{#each row as cell}<span>{cell}</span>{/each}{/each}
    </div>
    <div class="buttons"><button>Help</button><button class="default">Close</button></div>
  </section>
</div>

<style>
  :global(body) { background: #37343a; overflow: hidden; }
  .screen { position: relative; width: 1920px; height: 1080px; display: flex; flex-direction: column; background: #2c2c2c; font: 14px/18px "Noto Sans", sans-serif; color: #b2b2b2; white-space: nowrap; }
  .icon { display: block; flex: none; overflow: visible; }

  .topbar { height: 27px; display: grid; grid-template-columns: 118px 722px 240px 840px; align-items: center; background: #131313; color: #f0f0f0; font-size: 14.670px; flex: none; }
  .activities { padding-left: 18px; }
  .app { display: flex; gap: 6px; align-items: center; }
  .date { text-align: center; letter-spacing: -.1px; }
  .tray { display: flex; justify-content: flex-end; align-items: center; gap: 13px; padding-right: 12px; }
  .cones { display: flex; gap: 23px; margin-right: 17px; }
  .tray .percent { margin-left: -6px; letter-spacing: -.5px; }

  .titlebar { height: 37px; box-sizing: border-box; border-top: 1px solid #3e3e3e; border-bottom: 1px solid #1a1a1a; display: grid; grid-template-columns: 1fr auto 1fr; align-items: center; flex: none; }
  .titlebar strong { grid-column: 2; color: #b4b4b4; font-size: 14.670px; letter-spacing: -.1px; padding-bottom: 2px; }
  .controls { display: flex; justify-content: flex-end; gap: 24px; padding-right: 13px; }
  .menubar { height: 25px; padding-left: 8px; background: #333; display: flex; align-items: center; font-size: 14.500px; flex: none; }

  .toolbar { display: flex; align-items: center; flex: none; }
  .standard { height: 38px; }
  .formatting { height: 40px; padding-left: 4px; }
  .fmt { display: flex; align-items: center; margin-left: 7px; }
  .tool { position: relative; width: 24px; height: 24px; flex: none; display: flex; align-items: center; justify-content: center; }
  .tool.drop { width: 10px; }
  .tool.wide { width: 24px; }
  .tool.sep { width: 1px; height: 33px; background: #272727; }
  .caret { border: 3.500px solid transparent; border-top: 4px solid #f0f0f0; border-bottom: 0; margin-top: 3px; }
  .caret.off { border-top-color: #686868; }
  .pressed { position: absolute; inset: -5px -4px; background: #151515; border-radius: 5px; }
  .pressed.split { right: -16px; }
  .tool .icon { position: relative; }
  .fmt .drop .caret { position: relative; z-index: 1; }

  .combo { box-sizing: border-box; height: 34px; border: 1px solid #1b1b1b; border-radius: 6px; background: #303030; display: flex; overflow: hidden; color: #979797; flex: none; }
  .value { flex: 1; min-width: 0; padding-left: 8px; line-height: 31px; }
  .style .value { letter-spacing: -.02px; padding-left: 8px; }
  .gutter { width: 7px; border-left: 1px solid #1f1f1f; }
  .open { display: flex; align-items: center; justify-content: center; width: 34px; border-left: 1px solid #1b1b1b; background: #343434; }
  .style { width: 202px; }
  .styletools { display: flex; gap: 9px; margin: 0 10px 0 7px; }
  .font { width: 221px; margin-right: 8px; }
  .size { width: 100px; }
  .size .open { width: 33px; }

  .workspace { height: 804px; display: flex; flex: none; }
  .canvas { flex: 1; display: flex; align-items: flex-start; position: relative; }
  .corner { margin: 9px 0 0 8px; }
  .ruler { margin: 1px 0 0 538px; }
  .ruler text { font-size: 10px; fill: #8f8f8f; }
  .scroll { width: 6px; height: 34px; border-radius: 2px; background: #a8a8a8; margin: 767px 3px 0 auto; }
  .deck { position: relative; width: 59px; box-sizing: border-box; border-left: 1px solid #747474; padding-left: 2px; display: flex; flex-direction: column; align-items: center; }
  .burger { margin: 14px 0 23px; }
  .tab { width: 36px; height: 34px; margin-bottom: 8px; border-radius: 5px; display: flex; align-items: center; justify-content: center; flex: none; }
  .tab.active { background: #1f1f1f; }
  .handle { position: absolute; left: 0; top: 365px; width: 6px; height: 73px; background: #929292; display: flex; align-items: center; }

  .findbar { box-sizing: border-box; height: 39px; display: flex; align-items: center; padding: 0 0 1px 10px; flex: none; }
  .find { width: 249px; margin-left: 7px; color: #828282; }
  .arrows { display: flex; gap: 13px; margin-left: 7px; }
  .all { font-size: 12px; color: #777; margin-left: 9px; width: 53px; letter-spacing: -.15px; }
  .check { width: 14px; height: 14px; border: 1px solid #191919; border-radius: 3px; background: #303030; }
  .match { margin-left: 3px; width: 85px; }
  .rule { width: 1px; height: 32px; background: #272727; }
  .rule + .icon { margin: 0 8px 0 9px; }

  .status { height: 22px; box-sizing: border-box; border-top: 1px solid #707070; border-bottom: 1px solid #000; display: flex; align-items: center; font-size: 12px; letter-spacing: -.05px; color: #f0f0f0; flex: none; }
  .status > span { box-sizing: border-box; height: 16px; line-height: 17px; border-right: 1px solid #262626; padding-left: 8px; display: block; flex: none; }
  .status svg { display: block; }
  .status .state { width: 31px; padding: 4px 0 0 13px; }
  .status .pages { width: 289px; }
  .status .selected { width: 392px; }
  .status .pagestyle { width: 301px; }
  .status .language { width: 271px; padding: 0; text-align: center; }
  .status .blank { width: 68px; }
  .status .insert { width: 29px; padding: 3px 0 0 7px; }
  .status .tiny { width: 28px; }
  .status .gap { width: 251px; }
  .status .views { width: 76px; padding: 3px 0 0 11px; }
  .status .zoom { width: 142px; padding: 1px 0 0 7px; }
  .status .percent { border: 0; letter-spacing: 0; }

  .desktop { height: 48px; background: #37343a; padding-left: 96px; flex: none; }
  .dock { box-sizing: border-box; width: 1728px; height: 44px; border: 1px solid #484848; border-radius: 20px; background: #1b1b1b; padding-left: 2px; display: flex; align-items: center; }
  .launcher { position: relative; width: 38px; height: 32px; display: flex; align-items: center; justify-content: center; flex: none; }
  .launcher .icon { margin-top: -1px; }
  .launcher.active { width: 32px; margin: 0 3px; background: #454545; border-radius: 11px; }
  .dots { position: absolute; bottom: 0; display: flex; gap: 1px; }
  .dots i { width: 3px; height: 3px; border-radius: 2px; background: #0d73dd; }
  .divider { width: 1px; height: 16px; margin: 0 4px; background: #555; }

  .dialog { position: absolute; left: 546px; top: 189px; width: 757px; height: 770px; box-sizing: border-box; border: 1px solid #0d0d0d; border-radius: 10px 10px 0 0; background: #2c2c2c; box-shadow: 0 3px 12px #0008; display: flex; flex-direction: column; overflow: hidden; color: #f0f0f0; letter-spacing: .05px; }
  .head { height: 37px; box-sizing: border-box; background: #222; border-top: 1px solid #303030; border-bottom: 1px solid #171717; display: grid; grid-template-columns: 1fr auto 1fr; align-items: center; padding-bottom: 1px; flex: none; }
  .head strong { grid-column: 2; font-size: 14.200px; margin-top: -1px; }
  .close { justify-self: end; margin-right: 8px; width: 21px; height: 21px; border-radius: 50%; background: #383838; display: flex; align-items: center; justify-content: center; }
  .counts { display: grid; grid-template-columns: 202px 267px 272px; grid-auto-rows: 23px; line-height: 23px; padding-top: 5px; text-align: right; flex: 1; align-content: start; }
  .counts b.spread { letter-spacing: .4px; }
  .buttons { display: flex; justify-content: space-between; padding: 0 8px 8px; }
  button { width: 85px; height: 34px; padding: 0; border: 1px solid #171717; border-radius: 6px; background: #353535; color: #f0f0f0; font: inherit; letter-spacing: inherit; }
  button.default { border: 2px solid #2b73bd; }
</style>
